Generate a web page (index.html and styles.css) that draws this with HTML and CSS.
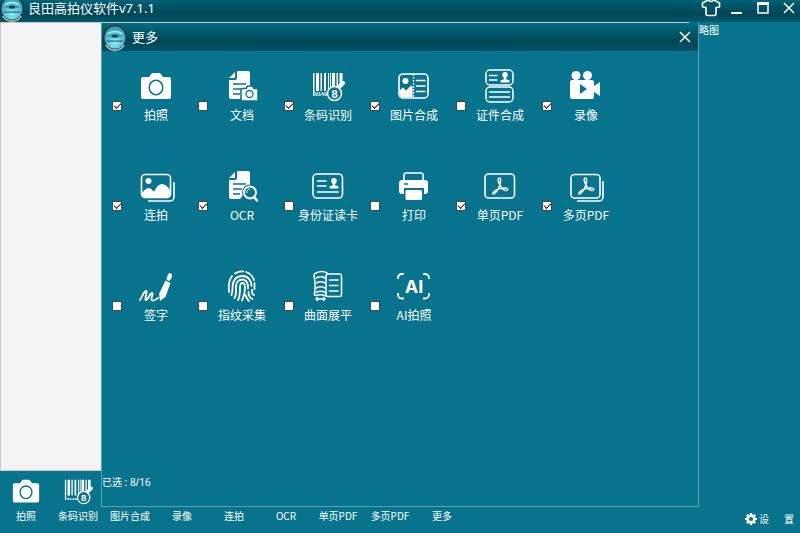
FILE: index.html
```html
<!DOCTYPE html>
<html lang="zh-CN">
<head>
  <meta charset="UTF-8">
  <meta name="viewport" content="width=device-width, initial-scale=1.0">
  <title>良田高拍仪软件v7.1.1</title>
  <link rel="stylesheet" href="styles.css">
</head>
<body>
  <!-- Icon set -->
  <svg class="icon-defs" aria-hidden="true">
    <defs>
      <radialGradient id="logoFill" cx="50%" cy="70%" r="70%">
        <stop offset="0" stop-color="#8ff0f8"/>
        <stop offset="0.5" stop-color="#55c2d4"/>
        <stop offset="1" stop-color="#2a8fa9"/>
      </radialGradient>
    </defs>
    <symbol id="logo" viewBox="0 0 26 28">
      <ellipse cx="13" cy="14" rx="12" ry="13" fill="url(#logoFill)" stroke="#2c3439" stroke-width="1.500"/>
      <path d="M3 22a12 13 0 0 0 20 0" fill="none" stroke="#c4c4c4" stroke-width="1.500"/>
      <path d="M5 10q8-5 16 0" fill="none" stroke="#a8eef5" stroke-width="1.500"/>
      <path d="M6 12q7-3 14 0-7 4-14 0z" fill="#4fc0d6" stroke="#2a7fa0" stroke-width="0.800"/>
      <ellipse cx="13" cy="12.500" rx="3.500" ry="1.500" fill="#123d55"/>
      <path d="M4 18h18" stroke="#2f7386" stroke-width="1.800" stroke-dasharray="1.500 0.500"/>
    </symbol>
    <symbol id="camera" viewBox="0 0 32 32">
      <path fill="currentColor" fill-rule="evenodd" d="M3 7h6l3-4h8l3 4h6a2 2 0 0 1 2 2v18a2 2 0 0 1-2 2H3a2 2 0 0 1-2-2V9a2 2 0 0 1 2-2zM16 9.500a7.500 8 0 1 0 0 16 7.500 8 0 1 0 0-16zM16 11a6 6.500 0 1 1 0 13 6 6.500 0 1 1 0-13z"/>
    </symbol>
    <symbol id="sheet" viewBox="0 0 32 32">
      <path fill="currentColor" d="M11 1h11a2 2 0 0 1 2 2v14L14 29H5a2 2 0 0 1-2-2V10h6a2 2 0 0 0 2-2zM9 2v5a1 1 0 0 1-1 1H3z"/>
      <path d="M7 14h13M7 19h9M7 24h7" stroke="#07738d" stroke-width="1.600"/>
    </symbol>
    <symbol id="document" viewBox="0 0 32 32">
      <use href="#sheet" width="32" height="32"/>
      <path fill="currentColor" stroke="#07738d" stroke-width="1.500" d="M16 18.500h4l1.500-2.500h5l1.500 2.500h3a1 1 0 0 1 1 1V30a1 1 0 0 1-1 1H16a1 1 0 0 1-1-1V19.500a1 1 0 0 1 1-1z"/>
      <circle cx="23.500" cy="24" r="3.500" fill="none" stroke="#07738d" stroke-width="1.300"/>
    </symbol>
    <symbol id="ocr" viewBox="0 0 32 32">
      <use href="#sheet" width="32" height="32"/>
      <circle cx="24" cy="22.500" r="8" fill="#07738d"/>
      <circle cx="24" cy="22.500" r="6" fill="none" stroke="currentColor" stroke-width="2"/>
      <path d="M21 23a3.500 3.500 0 0 1 3-4" fill="none" stroke="currentColor"/>
      <path d="M28 27l3 3.500" stroke="currentColor" stroke-width="2.500" stroke-linecap="round"/>
    </symbol>
    <symbol id="barcode" viewBox="0 0 32 32">
      <path fill="currentColor" d="M1 3h1.500v23H1zM4 3h3v18H4zM8.500 3H10v18H8.500zM12 3h2v18h-2zM18 3h1v15h-1zM20 3h3v13h-3zM24.500 3h1.500v13h-1.500zM27.500 3h3v12h-3zM16 3h1v18h-1z"/>
      <path d="M26 18l5-5" stroke="currentColor" stroke-width="4" stroke-linecap="round"/>
      <circle cx="22.500" cy="23.500" r="7" fill="#07738d" stroke="currentColor" stroke-width="1.500"/>
    </symbol>
    <symbol id="photoMerge" viewBox="0 0 32 32">
      <rect x="1" y="4" width="29" height="24" rx="4" fill="none" stroke="currentColor" stroke-width="1.600"/>
      <path d="M15.500 4v24" stroke="currentColor" stroke-width="1.300" stroke-dasharray="2 1"/>
      <circle cx="7.500" cy="11" r="3" fill="currentColor"/>
      <path fill="currentColor" d="M2 20l3-2.500 3 3 5-5 1.500 1.500v10H4a2 2 0 0 1-2-2z"/>
      <path d="M18.500 10.500H27M18.500 16H27M18.500 21.500H27" stroke="currentColor" stroke-width="1.600" stroke-linecap="round"/>
    </symbol>
    <symbol id="person" viewBox="0 0 8 10">
      <path fill="currentColor" d="M4 0a2.500 2.500 0 0 1 2.500 2.500Q6.500 4.500 5 5.500V6.500l3 1V9.500H0V7.500l3-1V5.500Q1.500 4.500 1.500 2.500A2.500 2.500 0 0 1 4 0z"/>
    </symbol>
    <symbol id="cardMerge" viewBox="0 0 32 32">
      <g fill="none" stroke="currentColor" stroke-width="1.500" stroke-linecap="round">
        <rect x="2" y="0" width="27" height="15" rx="4"/>
        <rect x="2" y="17" width="27" height="15" rx="4"/>
        <path d="M5.500 5.500H13M5.500 10H13M5.500 22h20M5.500 27h20"/>
      </g>
      <use href="#person" x="16" y="2" width="10" height="11"/>
    </symbol>
    <symbol id="video" viewBox="0 0 32 32">
      <circle cx="6" cy="5.500" r="4.500" fill="currentColor"/>
      <circle cx="17.500" cy="5.500" r="4.500" fill="currentColor"/>
      <path fill="currentColor" fill-rule="evenodd" d="M2 10h20a2 2 0 0 1 2 2v4l6-4v14l-6-4v5a2 2 0 0 1-2 2H2a2 2 0 0 1-2-2V12a2 2 0 0 1 2-2zM10 14v10l7-5z"/>
    </symbol>
    <symbol id="burst" viewBox="0 0 32 32">
      <rect x="1.500" y="4.500" width="29" height="23" rx="3.500" fill="none" stroke="currentColor" stroke-width="1.600"/>
      <circle cx="8.500" cy="11" r="3" fill="currentColor"/>
      <path fill="currentColor" d="M2 23q7-9 11-2 1 1 2-1 3-6 7-6 4 0 8 6v5a2 2 0 0 1-2 2H4a2 2 0 0 1-2-2z"/>
      <path d="M34 12v15a4 4 0 0 1-4 4H8" fill="none" stroke="currentColor" stroke-width="1.600"/>
    </symbol>
    <symbol id="idCard" viewBox="0 0 32 32">
      <g fill="none" stroke="currentColor" stroke-width="1.600" stroke-linecap="round">
        <rect x="1" y="4" width="29.500" height="24" rx="4"/>
        <path d="M5.500 11H14M5.500 16H14M5.500 22H26"/>
      </g>
      <use href="#person" x="17" y="8" width="10" height="11"/>
    </symbol>
    <symbol id="printer" viewBox="0 0 32 32">
      <path fill="none" stroke="currentColor" stroke-width="1.600" d="M6 10V5a2 2 0 0 1 2-2h15a2 2 0 0 1 2 2v5"/>
      <path fill="currentColor" d="M4 10h23a3 3 0 0 1 3 3v8a3 3 0 0 1-3 3h-1v-6H6v6H4a3 3 0 0 1-3-3v-8a3 3 0 0 1 3-3z"/>
      <path d="M6 14h4" stroke="#07738d" stroke-width="1.500"/>
      <rect x="7.500" y="20" width="16.500" height="10" rx="1.500" fill="currentColor"/>
    </symbol>
    <symbol id="acrobat" viewBox="0 0 18 18">
      <path fill="none" stroke="currentColor" stroke-width="1.500" stroke-linejoin="round" d="M8.500 1c-2 0-1.500 3.500 0 6 2 4 5 7 7 6.500 2-.5 1.500-2.500-1-2.500-4 0-9 1.500-11.500 3.500-2 1.500-1 3.500.5 2 3-2.500 5.500-8 6-12 .3-2-.2-3.500-1-3.500z"/>
    </symbol>
    <symbol id="pdf" viewBox="0 0 32 32">
      <rect x="1" y="4" width="29.500" height="24" rx="3.500" fill="none" stroke="currentColor" stroke-width="1.600"/>
      <use href="#acrobat" x="7" y="7" width="18" height="18"/>
    </symbol>
    <symbol id="pdfMulti" viewBox="0 0 32 32">
      <rect x="1" y="4.500" width="29" height="23.500" rx="3.500" fill="none" stroke="currentColor" stroke-width="1.600"/>
      <use href="#acrobat" x="7" y="7" width="18" height="18"/>
      <path d="M33 11v16a4 4 0 0 1-4 4H7" fill="none" stroke="currentColor" stroke-width="1.600"/>
    </symbol>
    <symbol id="sign" viewBox="0 0 32 32">
      <path d="M0 30c2-3 4-9 6-9 2 0-2 9 0 9s4-7 6-7c2 0-2 7 0 7.500 3 .5 4-1.500 6-2.500" fill="none" stroke="currentColor" stroke-width="1.800" stroke-linecap="round"/>
      <path fill="currentColor" d="M25.500 10.500l5 2.500-5 14-5.500 4-1-7z"/>
      <path d="M28.800 8.500l1.200-3" stroke="currentColor" stroke-width="4.500" stroke-linecap="round"/>
    </symbol>
    <symbol id="finger" viewBox="0 0 32 32">
      <g fill="none" stroke="currentColor" stroke-width="1.800" stroke-linecap="round">
        <path d="M9 3.500Q13 1 17 1.500M20 2q6 2 8 8M6 6c-4 5-3.500 11-3 16M5.500 25q1-2 1-7c0-7 3-12 10-12 6 0 9 5 9 10M28.500 13v6"/>
        <path d="M8.500 28c2-3 1.500-7 1.500-11 0-4 2-7.500 6-7.500s5.500 3 6 6v3M12 30c2-3 2-8 2-12 0-3 1-5 2.500-5s2.500 2 2.500 5c0 6-1 8-3 12.500M22.500 22c0 3 1 6 4 7M19.500 25c1 3 2 5 3.500 6M26 20c0 3 1 5 2 5"/>
      </g>
    </symbol>
    <symbol id="flatten" viewBox="0 0 32 32">
      <g fill="none" stroke="currentColor" stroke-width="1.500" stroke-linecap="round">
        <path d="M14 26q-6-2-10-.5-2 0-1.500-2 1.500-9-.5-17 0-3 2-3.500 6-3 11 0V4"/>
        <path d="M4 8q5-2.500 9 0M4.500 13q4-2.500 8.500 0M4.500 18q4-2.500 8.500 0M4 22.500q5-2.500 9 0"/>
        <rect x="14" y="4" width="15.500" height="22.500" rx="2"/>
        <path d="M17.500 10H26M17.500 15.500H26M17.500 21H26M4 29h9M5.500 27.500L4 29l1.500 1.500M11.500 27.500L13 29l-1.500 1.500"/>
      </g>
    </symbol>
    <symbol id="scanFrame" viewBox="0 0 32 32">
      <path d="M0 9V7a4 4 0 0 1 4-3h2M25 4h2a4 4 0 0 1 4 4v1M0 23v2a4 4 0 0 0 4 3.500h2M25 28.500h2a4 4 0 0 0 4-4V23" fill="none" stroke="currentColor" stroke-width="1.800"/>
    </symbol>
    <symbol id="shirt" viewBox="0 0 20 18">
      <path fill="none" stroke="currentColor" stroke-width="1.600" stroke-linejoin="round" d="M7 1L1.500 4v4L5 8.500V15q0 1.500 1.500 1.500h7Q15 16.500 15 15V8.500L18.500 8V4L13 1q-3 3-6 0z"/>
    </symbol>
    <symbol id="gear" viewBox="0 0 12 12">
      <circle cx="6" cy="6" r="3.400" fill="none" stroke="currentColor" stroke-width="2.600"/>
      <path d="M6 0v2.500M6 9.500V12M0 6h2.500M9.500 6H12M1.800 1.800l1.700 1.700M8.500 8.500l1.700 1.700M10.200 1.800L8.500 3.500M3.500 8.500l-1.700 1.700" stroke="currentColor" stroke-width="2.200"/>
    </symbol>
  </svg>

  <header class="title-bar">
    <svg class="logo"><use href="#logo"/></svg>
    <h1>良田高拍仪软件v7.1.1</h1>
    <div class="window-buttons">
      <button type="button" aria-label="皮肤"><svg width="20" height="18"><use href="#shirt"/></svg></button>
      <button type="button" aria-label="最小化"><svg width="12" height="14"><path d="M0 12h11" stroke="currentColor" stroke-width="2"/></svg></button>
      <button type="button" aria-label="最大化"><svg width="12" height="14"><path d="M1 2v10h10V2z" fill="none" stroke="currentColor" stroke-width="1.500"/><path d="M0 2.500h12" stroke="currentColor" stroke-width="3"/></svg></button>
      <button type="button" aria-label="关闭"><svg width="12" height="14"><path d="M1 2l10 10M11 2L1 12" stroke="currentColor" stroke-width="1.500"/></svg></button>
    </div>
  </header>

  <main class="workspace">
    <div class="preview"></div>
    <aside class="thumbs">缩略图</aside>
  </main>

  <footer class="toolbar">
    <nav class="tools">
      <button type="button"><svg><use href="#camera"/></svg>拍照</button>
      <button type="button"><svg viewBox="0 0 32 32"><use href="#barcode" width="32" height="32"/><text x="3" y="26" class="svg-code">0140</text><text x="22.500" y="27.500" class="svg-eight">8</text></svg>条码识别</button>
      <button type="button"><svg><use href="#photoMerge"/></svg>图片合成</button>
      <button type="button"><svg><use href="#video"/></svg>录像</button>
      <button type="button"><svg><use href="#burst"/></svg>连拍</button>
      <button type="button"><svg><use href="#ocr"/></svg>OCR</button>
      <button type="button"><svg><use href="#pdf"/></svg>单页PDF</button>
      <button type="button"><svg><use href="#pdfMulti"/></svg>多页PDF</button>
      <button type="button"><svg></svg>更多</button>
    </nav>
    <button type="button" class="settings"><svg width="12" height="12"><use href="#gear"/></svg><span>设</span><span>置</span></button>
  </footer>

  <section class="dialog" role="dialog" aria-labelledby="dialogTitle">
    <div class="dialog-header">
      <svg class="logo"><use href="#logo"/></svg>
      <h2 id="dialogTitle">更多</h2>
      <button type="button" class="close" aria-label="关闭"><svg width="12" height="12"><path d="M1 1l10 10M11 1L1 11" stroke="currentColor" stroke-width="1.500"/></svg></button>
    </div>
    <div class="options">
      <label class="option"><input type="checkbox" checked><span><svg><use href="#camera"/></svg>拍照</span></label>
      <label class="option"><input type="checkbox"><span><svg><use href="#document"/></svg>文档</span></label>
      <label class="option"><input type="checkbox" checked><span><svg viewBox="0 0 32 32"><use href="#barcode" width="32" height="32"/><text x="3" y="26" class="svg-code">0140</text><text x="22.500" y="27.500" class="svg-eight">8</text></svg>条码识别</span></label>
      <label class="option"><input type="checkbox" checked><span><svg><use href="#photoMerge"/></svg>图片合成</span></label>
      <label class="option"><input type="checkbox"><span><svg><use href="#cardMerge"/></svg>证件合成</span></label>
      <label class="option"><input type="checkbox" checked><span><svg><use href="#video"/></svg>录像</span></label>
      <label class="option"><input type="checkbox" checked><span><svg><use href="#burst"/></svg>连拍</span></label>
      <label class="option"><input type="checkbox" checked><span><svg><use href="#ocr"/></svg>OCR</span></label>
      <label class="option"><input type="checkbox"><span><svg><use href="#idCard"/></svg>身份证读卡</span></label>
      <label class="option"><input type="checkbox"><span><svg><use href="#printer"/></svg>打印</span></label>
      <label class="option"><input type="checkbox" checked><span><svg><use href="#pdf"/></svg>单页PDF</span></label>
      <label class="option"><input type="checkbox" checked><span><svg><use href="#pdfMulti"/></svg>多页PDF</span></label>
      <label class="option"><input type="checkbox"><span><svg><use href="#sign"/></svg>签字</span></label>
      <label class="option"><input type="checkbox"><span><svg><use href="#finger"/></svg>指纹采集</span></label>
      <label class="option"><input type="checkbox"><span><svg><use href="#flatten"/></svg>曲面展平</span></label>
      <label class="option"><input type="checkbox"><span><svg viewBox="0 0 32 32"><use href="#scanFrame" width="32" height="32"/><text x="16" y="22.500" class="svg-ai">AI</text></svg>AI拍照</span></label>
    </div>
    <p class="selected">已选 : 8/16</p>
  </section>
</body>
</html>
```

FILE: styles.css
```css
* {
  box-sizing: border-box;
}
body {
  margin: 0;
  height: 100vh;
  display: flex;
  flex-direction: column;
  overflow: hidden;
  background: #07738d;
  color: #fff;
  font-family: "Noto Sans CJK SC", sans-serif;
  font-size: 12px;
}
button {
  padding: 0;
  border: none;
  background: none;
  color: inherit;
  font-family: inherit;
  cursor: pointer;
}
svg, symbol {
  overflow: visible;
}
.icon-defs {
  position: absolute;
  width: 0;
  height: 0;
}
.svg-code {
  font: bold 5px "Liberation Mono", monospace;
  fill: currentColor;
}
.svg-eight {
  font: bold 11px "Liberation Sans", sans-serif;
  fill: currentColor;
  text-anchor: middle;
}
.svg-ai {
  font: bold 18px Inter, sans-serif;
  fill: currentColor;
  text-anchor: middle;
}
.logo {
  width: 24px;
  height: 27px;
}

/* Main window */
.title-bar {
  height: 22px;
  flex-shrink: 0;
  display: flex;
  align-items: center;
  gap: 4px;
  background: linear-gradient(#006379 0%, #00566a 20%, #004655 65%, #005b6e 100%);
}
.title-bar .logo {
  align-self: flex-end;
}
h1, h2 {
  margin: 0;
  font-family: "Noto Sans", "Noto Sans CJK SC", sans-serif;
  font-size: 13px;
  font-weight: normal;
  line-height: 18px;
}
h1 {
  padding-bottom: 6px;
}
.window-buttons {
  display: flex;
  align-items: center;
  gap: 4px;
  margin-left: auto;
  padding-bottom: 7px;
}
.window-buttons button {
  width: 22px;
}
.window-buttons svg {
  display: block;
  margin: 0 auto;
}
.workspace {
  flex: 1;
  display: flex;
}
.preview {
  flex: 1;
  background: #f4f4f4;
  border: 1px solid #c8c8c8;
}
.thumbs {
  width: 111px;
  font-size: 10px;
  line-height: 16px;
}
.toolbar {
  height: 62px;
  flex-shrink: 0;
  display: flex;
  justify-content: space-between;
}
.tools {
  display: flex;
}
.tools button {
  width: 52px;
  display: flex;
  flex-direction: column;
  align-items: center;
  gap: 4px;
  padding-top: 6px;
  font-size: 10px;
  line-height: 14px;
}
.tools svg {
  width: 28px;
  height: 28px;
}
.settings {
  display: flex;
  align-items: center;
  align-self: flex-end;
  padding: 0 6px 7px 0;
  font-size: 10px;
  line-height: 14px;
}
.settings span {
  margin-left: 2px;
}
.settings span:last-child {
  margin-left: 15px;
}

/* "More" dialog */
.dialog {
  position: absolute;
  top: 23px;
  right: 101px;
  bottom: 26px;
  left: 101px;
  display: flex;
  flex-direction: column;
  background: #07738d;
  border: 1px solid #5aa0b1;
  border-top: none;
}
.dialog-header {
  height: 28px;
  display: flex;
  align-items: center;
  gap: 5px;
  padding: 0 7px 0 1px;
  background: linear-gradient(#006c83 0%, #004655 65%, #005366 100%);
}
.close {
  margin-left: auto;
}
.close svg {
  display: block;
}
.options {
  display: grid;
  grid-template-columns: repeat(auto-fill, 86px);
  row-gap: 46px;
  padding: 19px 8px 0 10px;
}
.option {
  display: flex;
  align-items: flex-end;
  gap: 3px;
}
.option span {
  width: 62px;
  display: flex;
  flex-direction: column;
  align-items: center;
  gap: 4px;
  line-height: 18px;
  white-space: nowrap;
}
.option svg {
  width: 32px;
  height: 32px;
}
.option input {
  appearance: none;
  width: 10px;
  height: 10px;
  margin: 0 0 13px;
  background: #fff;
  border: 1px solid #3d464a;
}
.option input:checked::after {
  content: "";
  display: block;
  width: 6px;
  height: 3px;
  margin: 1px;
  border: solid #222;
  border-width: 0 0 1px 1px;
  transform: rotate(-45deg);
}
.selected {
  margin: auto 0 16px;
  font-family: "Noto Sans", "Noto Sans CJK SC", sans-serif;
  font-size: 10px;
  line-height: 16px;
}
```
